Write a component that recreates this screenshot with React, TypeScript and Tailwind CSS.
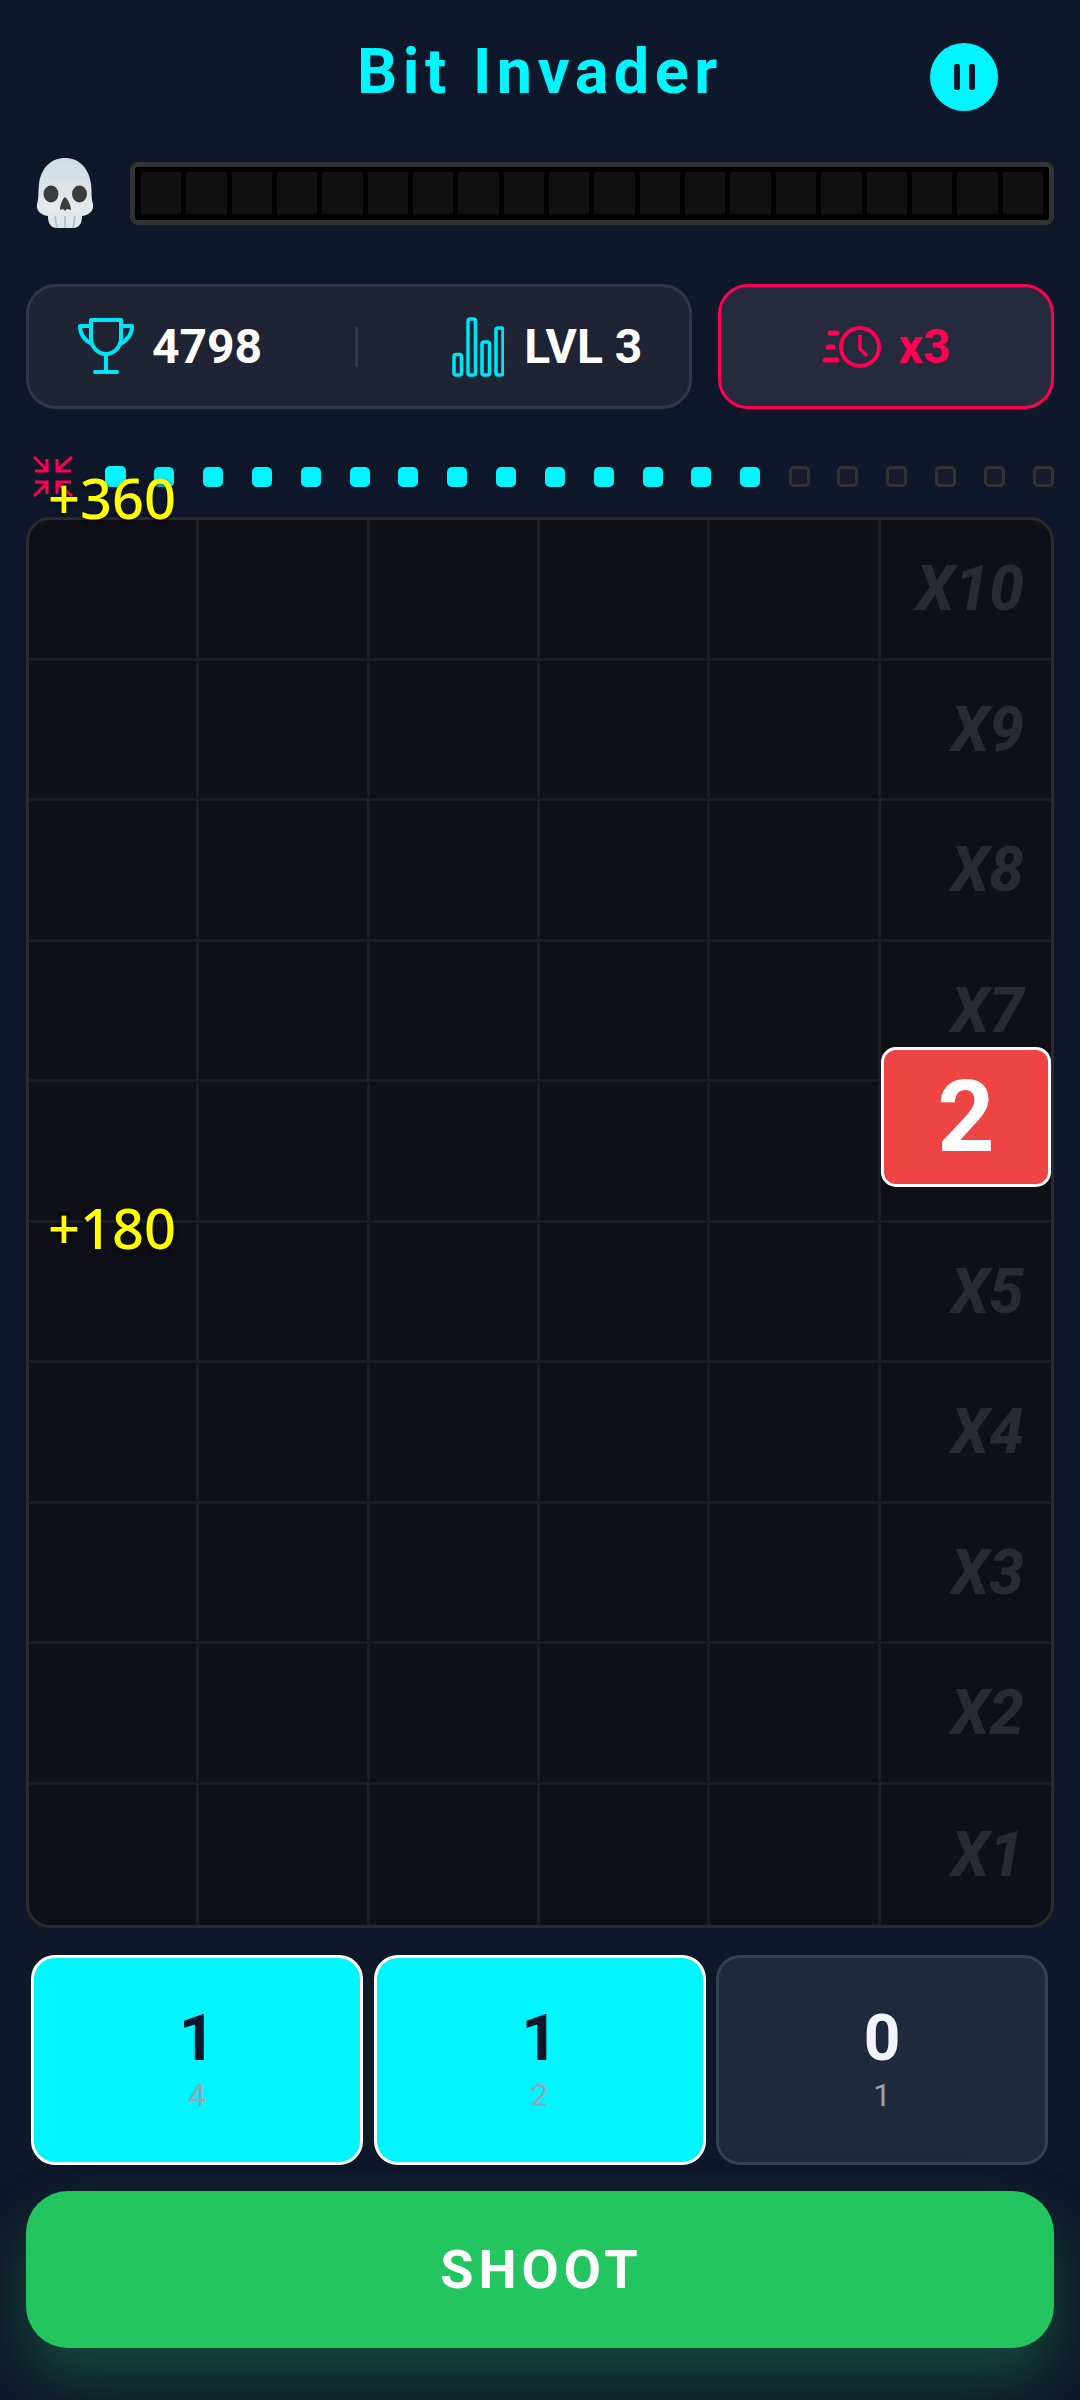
import React from "react";

const Skull = () => (
  <svg width="58" height="70" viewBox="0 0 58 70" aria-hidden="true">
    <defs>
      <linearGradient id="skullFill" x1="0" y1="0" x2="0" y2="1">
        <stop offset="0" stopColor="#cfdbe3" />
        <stop offset="0.7" stopColor="#e4e9ed" />
        <stop offset="1" stopColor="#dde3e8" />
      </linearGradient>
    </defs>
    <path
      d="M29 0C15 0 5 10 3 26C2 34 3 40 1 46C0 52 4 57 12 58C12 63 13 69 20 70H38C45 69 46 63 46 58C54 57 58 52 57 46C55 40 56 34 55 26C53 10 43 0 29 0Z"
      fill="url(#skullFill)"
    />
    <ellipse cx="15" cy="36" rx="7.5" ry="8.5" fill="#3c3c3c" />
    <ellipse cx="43.5" cy="36" rx="7.5" ry="8.5" fill="#3c3c3c" />
    <path d="M29 39C26 41 24 48 24 52L27 51L29 53L31 51L35 52C35 48 32 41 29 39Z" fill="#3c3c3c" />
    <path d="M19 58L21 70M29 58V70M39 58L37 70" stroke="#9cc3d5" strokeWidth="1.6" />
  </svg>
);

const Trophy = () => (
  <svg width="56" height="57" viewBox="0 0 56 57" fill="none" stroke="#00e5f5" strokeWidth="4" strokeLinecap="round" strokeLinejoin="round" aria-hidden="true">
    <path d="M13 2H43V20C43 29 36 36 28 36C20 36 13 29 13 20Z" />
    <path d="M13 8H2C2 16 6 22 14 26" />
    <path d="M43 8H54C54 16 50 22 42 26" />
    <path d="M28 36V54" />
    <path d="M17 54H39" />
  </svg>
);

const Bars = () => (
  <svg width="52" height="60" viewBox="0 0 52 60" fill="none" stroke="#00e5f5" strokeWidth="3.5" aria-hidden="true">
    <rect x="2" y="37.5" width="7.5" height="20.5" rx="2" />
    <rect x="16" y="2" width="7.5" height="56" rx="2" />
    <rect x="30" y="25" width="7.5" height="33" rx="2" />
    <rect x="44" y="11" width="7" height="47" rx="2" />
  </svg>
);

const SpeedClock = () => (
  <svg width="60" height="44" viewBox="0 0 60 44" fill="none" stroke="#ff0055" strokeWidth="4" strokeLinecap="round" strokeLinejoin="round" aria-hidden="true">
    <circle cx="38" cy="22" r="19" />
    <path d="M38 10V24L45 31" strokeLinecap="butt" strokeWidth="3.5" />
    <path d="M8 8H15" strokeWidth="5" />
    <path d="M6 22H11" strokeWidth="5" />
    <path d="M3 35H15" strokeWidth="5" />
  </svg>
);

const Shrink = () => (
  <svg width="40" height="41" viewBox="0 0 40 41" fill="none" stroke="#ff0055" strokeWidth="3" aria-hidden="true">
    <path d="M1 1L14 14M14 3V15H2" />
    <path d="M39 1L24 14M24 3V15H38" />
    <path d="M1 40L14 27M14 38V26H2" />
    <path d="M39 40L24 27M24 38V26H38" />
  </svg>
);

const labels = ["X10", "X9", "X8", "X7", "X6", "X5", "X4", "X3", "X2", "X1"];
const segments = Array.from({ length: 20 }, (_, i) => i);
const rowsFilled = Array.from({ length: 60 }, (_, i) => i);

export default function App() {
  return (
    <div className="relative flex h-[2400px] w-[1080px] flex-col overflow-hidden bg-[#0f172a] px-[26px] pt-[43px] font-['Roboto',sans-serif]">
      {/* header */}
      <div className="grid h-[68px] grid-cols-[1fr_auto_1fr] items-center">
        <div />
        <div className="-mt-[12px] text-[63px] leading-none font-bold tracking-[5.5px] text-[#00f5ff]">Bit Invader</div>
        <div className="flex justify-end pr-[56px]">
          <div className="flex h-[68px] w-[68px] items-center justify-center gap-[9px] rounded-full bg-[#00f5ff]">
            <span className="h-[26px] w-[6px] rounded-[2px] bg-[#0f172a]" />
            <span className="h-[26px] w-[6px] rounded-[2px] bg-[#0f172a]" />
          </div>
        </div>
      </div>

      {/* health */}
      <div className="mt-[47px] flex items-center">
        <div className="ml-[10px] flex w-[94px] shrink-0">
          <Skull />
        </div>
        <div className="flex h-[63px] flex-1 items-center gap-[5px] rounded-[8px] border-[5px] border-[#333333] bg-black px-[6px]">
          {segments.map((s) => (
            <span key={s} className="h-[42px] flex-1 rounded-[2px] bg-[#111111]" />
          ))}
        </div>
      </div>

      {/* stats */}
      <div className="mt-[56px] flex h-[125px] gap-[26px]">
        <div className="flex w-[666px] items-center rounded-[30px] border-[3px] border-[#2f3848] bg-[#1e2434] pl-[49px]">
          <Trophy />
          <span className="ml-[18px] text-[48px] font-bold text-white">4798</span>
          <span className="ml-[93px] h-[40px] w-[3px] bg-[#2f3848]" />
          <span className="ml-[94px] flex"><Bars /></span>
          <span className="ml-[20px] text-[48px] font-bold text-white">LVL 3</span>
        </div>
        <div className="flex flex-1 items-center justify-center gap-[17px] rounded-[30px] border-[3px] border-[#ff0055] bg-[#252a3c]">
          <SpeedClock />
          <span className="text-[48px] font-bold text-[#ff0055]">x3</span>
        </div>
      </div>

      {/* combo */}
      <div className="mt-[47px] flex h-[41px] items-center">
        <div className="ml-[7px] flex w-[72px] shrink-0">
          <Shrink />
        </div>
        <div className="flex flex-1 items-center justify-between">
          {segments.map((s) => (
            <span key={s} className="flex h-[21px] w-[21px] items-center justify-center">
              {s < 14 ? (
                <span className={s === 0 ? "h-[21px] w-[21px] rounded-[5px] bg-[#00f5ff]" : "h-[20px] w-[20px] rounded-[5px] bg-[#00f5ff]"} />
              ) : (
                <span className="h-[21px] w-[21px] rounded-[5px] border-[3px] border-[#333333] bg-[#1a1a2e]" />
              )}
            </span>
          ))}
        </div>
      </div>

      {/* board */}
      <div className="relative mt-[20px] h-[1411px] overflow-hidden rounded-[24px] border-[3px] border-[#2a2a2e] bg-[#0e0f17]">
        <div className="grid h-full grid-cols-6 grid-rows-10">
          {rowsFilled.map((i) => (
            <div
              key={i}
              className={
                (i % 6 === 5 ? "" : "border-r-[3px] ") +
                (i >= 54 ? "" : "border-b-[3px] ") +
                "flex items-center justify-end border-[#1c1c24] pr-[27px]"
              }
            >
              {i % 6 === 5 && labels[(i - 5) / 6] !== "X6" && (
                <span className="text-[62px] font-extrabold text-[#2a2a33] italic">{labels[(i - 5) / 6]}</span>
              )}
            </div>
          ))}
        </div>
        <div className="absolute top-[527px] left-[852px] flex h-[140px] w-[170px] items-center justify-center rounded-[15px] border-[3px] border-white bg-[#ef4444] text-[100px] font-bold text-white">
          2
        </div>
      </div>

      {/* score floats */}
      <div className="absolute top-[461px] left-[48px] font-['Noto_Sans',sans-serif] text-[56px] leading-[72px] font-medium text-[#ffff00] [text-shadow:0_2px_4px_rgba(0,0,0,0.6)]">+360</div>
      <div className="absolute top-[1191px] left-[48px] font-['Noto_Sans',sans-serif] text-[56px] leading-[72px] font-medium text-[#ffff00] [text-shadow:0_2px_4px_rgba(0,0,0,0.6)]">+180</div>

      {/* cards */}
      <div className="mt-[27px] flex h-[210px] gap-[10.5px] px-[5px]">
        {[
          { n: "1", s: "4" },
          { n: "1", s: "2" },
        ].map((c, i) => (
          <div key={i} className="flex w-[332px] flex-col items-center rounded-[24px] border-[3px] border-white bg-[#00f5ff] pt-[46px]">
            <span className="text-[64px] leading-[70px] font-bold text-[#0f172a]">{c.n}</span>
            <span className="mt-[2px] text-[32px] leading-[38px] text-[#94a3b8]">{c.s}</span>
          </div>
        ))}
        <div className="flex w-[332px] flex-col items-center rounded-[24px] border-[3px] border-[#334155] bg-[#1e293b] pt-[46px]">
          <span className="text-[64px] leading-[70px] font-bold text-[#f1f5f9]">0</span>
          <span className="mt-[2px] text-[32px] leading-[38px] text-[#94a3b8]">1</span>
        </div>
      </div>

      {/* shoot */}
      <div className="mt-[26px] flex h-[157px] items-center justify-center rounded-[42px] bg-[#22c55e] pl-[3px] text-[54px] font-bold tracking-[5px] text-white shadow-[0_30px_60px_rgba(34,197,94,0.3)]">
        SHOOT
      </div>
    </div>
  );
}
